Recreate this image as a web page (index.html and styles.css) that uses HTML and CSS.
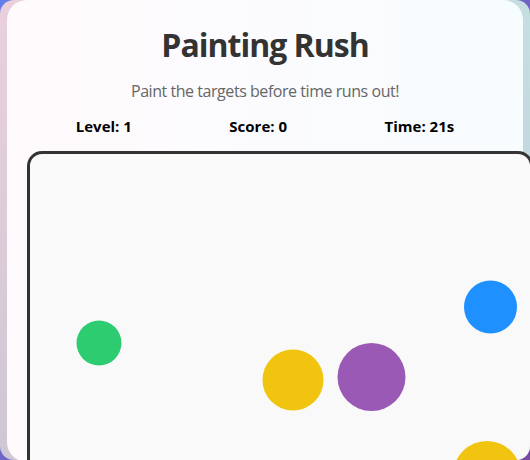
FILE: index.html
```html
<!DOCTYPE html>
<html lang="en">
<head>
<meta charset="utf-8">
<title>Painting Rush</title>
<link rel="stylesheet" href="styles.css">
</head>
<body>
<div class="frame">
  <div class="card">
    <h1 class="title">Painting Rush</h1>
    <p class="subtitle">Paint the targets before time runs out!</p>
    <div class="stats">
      <span class="stat">Level: 1</span>
      <span class="stat">Score: 0</span>
      <span class="stat">Time: 21s</span>
    </div>
    <div class="board">
      <svg class="board-svg" width="500" height="400" viewBox="0 0 500 400">
        <circle cx="69" cy="189" r="22.5" fill="#2ecc71"/>
        <circle cx="263" cy="226" r="30.5" fill="#f1c40f"/>
        <circle cx="341.5" cy="223" r="34" fill="#9b59b6"/>
        <circle cx="460.5" cy="153" r="26.5" fill="#1e90ff"/>
        <circle cx="457" cy="321" r="34" fill="#f1c40f"/>
      </svg>
    </div>
  </div>
</div>
</body>
</html>
```

FILE: styles.css
```css
html, body {
  margin: 0;
  padding: 0;
}
body {
  width: 530px;
  height: 460px;
  overflow: hidden;
  background: linear-gradient(135deg, #667eea 0%, #764ba2 100%);
  font-family: "Open Sans", "Noto Sans", sans-serif;
}
.frame {
  width: 530px;
  height: 460px;
  border-radius: 14px;
  overflow: hidden;
  background:
    linear-gradient(to bottom, rgba(255,255,255,0) 0%, rgba(180,190,205,0.5) 100%),
    linear-gradient(to right, #ead0dc 0%, #d8d6e0 50%, #c4dfe2 100%);
}
.card {
  margin-left: 7px;
  width: 516px;
  height: 462px;
  box-sizing: border-box;
  padding: 0 20px;
  border-radius: 20px;
  background: linear-gradient(to right, #fffafc 0%, #fbfbfd 50%, #f7fcfe 100%);
}
.title {
  margin: 0;
  padding-top: 23px;
  font-size: 32px;
  line-height: 44px;
  font-weight: 700;
  letter-spacing: -1px;
  color: #333333;
  text-align: center;
}
.subtitle {
  margin: 13px 0 0;
  font-size: 16px;
  line-height: 22px;
  letter-spacing: -0.45px;
  color: #666666;
  text-align: center;
}
.stats {
  margin-top: 14px;
  display: flex;
  justify-content: space-around;
  font-size: 15px;
  line-height: 20px;
  font-weight: 700;
  color: #000000;
}
.board {
  margin-top: 15px;
  width: 500px;
  height: 400px;
  border: 3px solid #333333;
  border-radius: 15px;
  background: #f9f9f9;
  overflow: hidden;
}
.board-svg {
  display: block;
}
```
